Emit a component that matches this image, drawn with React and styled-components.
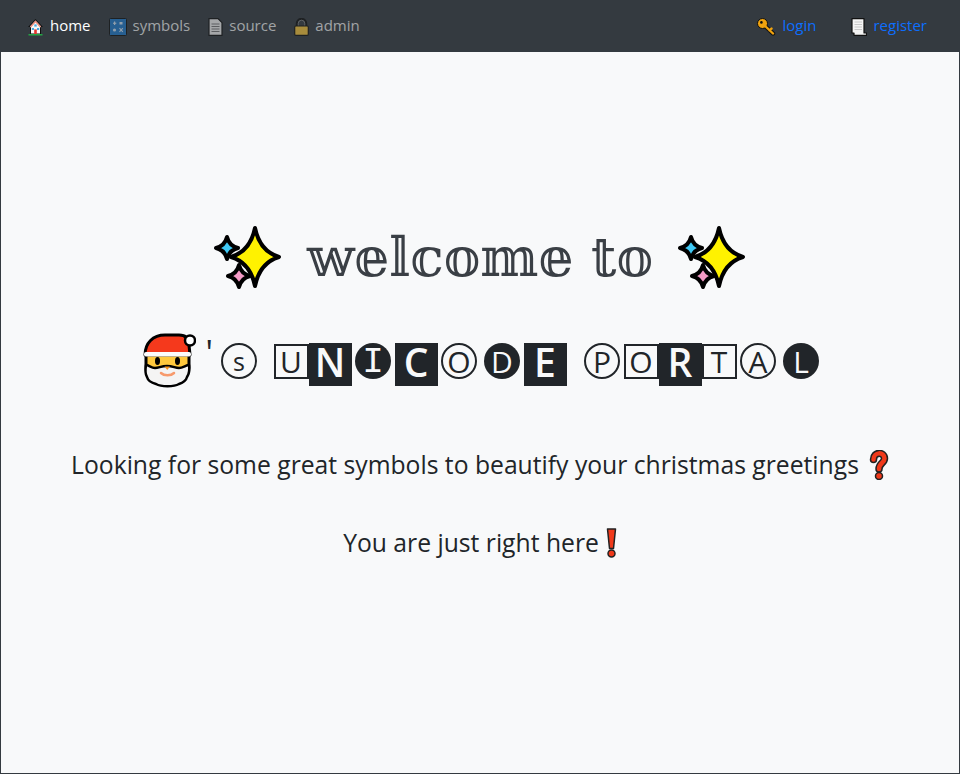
import React from 'react';
import styled, { createGlobalStyle } from 'styled-components';

const GlobalStyle = createGlobalStyle`
    html, body {
        margin: 0;
        padding: 0;
        height: 100%;
    }
    #root {
        height: 100%;
    }
    body {
        font-family: "Open Sans", "Noto Sans", sans-serif;
        color: #212529;
        background-color: #f8f9fa;
    }
`;

const Page = styled.div`
    box-sizing: border-box;
    height: 774px;
    display: flex;
    flex-direction: column;
    border: 1px solid #343a40;
    border-top: none;
`;

const NavBar = styled.nav`
    height: 52px;
    flex-shrink: 0;
    display: flex;
    align-items: center;
    justify-content: space-between;
    padding: 0 32px 0 26px;
    background-color: #343a40;
`;

const NavGroup = styled.div`
    display: flex;
    align-items: center;
    gap: ${(props) => props.$gap}px;
`;

const NavLink = styled.a`
    display: flex;
    align-items: center;
    gap: 6px;
    height: 20px;
    font-size: 15px;
    line-height: 16px;
    color: ${(props) => props.$color};
    text-decoration: none;

    svg {
        flex-shrink: 0;
        margin-top: 1px;
        opacity: ${(props) => props.$dim ? 0.6 : 1};
    }
`;

const NavLabel = styled.span`
    display: block;
    padding-bottom: 2px;
`;

const Main = styled.main`
    flex: 1;
    display: flex;
    flex-direction: column;
    align-items: center;
    padding-top: 169px;
`;

const Heading = styled.h1`
    margin: 0;
    display: flex;
    align-items: center;
    gap: 25px;
    height: 72px;
    font-family: "DejaVu Serif", serif;
    font-size: 55px;
    font-weight: 400;
    color: #3a3f45;
    white-space: nowrap;
`;

const Portal = styled.h2`
    margin: 40px 0 0;
    padding-left: 3px;
    display: flex;
    align-items: flex-start;
    height: 55px;
    font-weight: 400;
`;

const Santa = styled.svg`
    margin-right: 10px;
`;

const Apostrophe = styled.span`
    width: 12px;
    margin-top: 2px;
    font-size: 34px;
    line-height: 34px;
`;

const Word = styled.span`
    display: flex;
    align-items: flex-start;
    margin-left: ${(props) => props.$gap}px;
`;

const Letter = styled.span`
    box-sizing: border-box;
    flex-shrink: 0;
    display: flex;
    align-items: center;
    justify-content: center;
    margin-top: 10px;
    ${(props) => props.$kind === 'outline' && `
        width: 35px;
        height: 35px;
        margin-top: 11px;
        border: 2px solid #212529;
        font-size: 30px;
        font-weight: 400;
        color: #212529;
    `}
    ${(props) => props.$kind === 'solid' && `
        width: 43px;
        height: 43px;
        padding-bottom: 7px;
        background-color: #212529;
        font-size: 39px;
        font-weight: 600;
        color: #f8f9fa;
    `}
    ${(props) => props.$kind === 'ring' && `
        width: 36px;
        height: 36px;
        margin-left: 3.5px;
        margin-right: 3.5px;
        border: 2px solid #212529;
        border-radius: 50%;
        font-size: 30px;
        font-weight: 400;
        color: #212529;
    `}
    ${(props) => props.$kind === 'disc' && `
        width: 36px;
        height: 36px;
        margin-left: 3.5px;
        margin-right: 3.5px;
        background-color: #212529;
        border-radius: 50%;
        font-size: 30px;
        font-weight: 400;
        color: #f8f9fa;
    `}
    ${(props) => props.$slab && `
        padding-top: 3px;
        font-family: "Liberation Mono", monospace;
        font-size: 36px;
    `}
    ${(props) => props.$small && `
        font-size: 25px;
    `}
`;

const Lead = styled.p`
    margin: ${(props) => props.$top}px 0 0;
    display: flex;
    align-items: center;
    gap: ${(props) => props.$gap}px;
    font-size: 24.7px;
    line-height: 36px;
    white-space: nowrap;
`;

const HomeIcon = () => (
    <svg width="17" height="18" viewBox="0 0 17 18">
        <path d="M8.5 1 L16 9 H14 V16.500 H3 V9 H1 Z" fill="#111" />
        <path d="M8.500 2.600 L14 8.400 L13 9.500 V15.500 H4 V9.500 L3 8.400 Z" fill="#f7f7f7" />
        <path d="M8.500 2.600 L14 8.400 L13 9.400 L8.500 4.600 L4 9.400 L3 8.400 Z" fill="#ee8a78" />
        <rect x="7.300" y="6.400" width="2.400" height="2.200" fill="#49a8e0" />
        <rect x="4.800" y="10" width="2.200" height="2" fill="#49a8e0" />
        <rect x="10" y="10" width="2.200" height="2" fill="#49a8e0" />
        <rect x="7.200" y="11.400" width="2.600" height="4.600" fill="#e5352b" />
        <rect x="1.500" y="16" width="14" height="1.500" fill="#23a344" />
    </svg>
);

const SymbolsIcon = () => (
    <svg width="18" height="18" viewBox="0 0 18 18">
        <rect x="0.500" y="0.500" width="17" height="17" rx="1" fill="#1f78c8" stroke="#111" />
        <rect x="5" y="3.500" width="1.200" height="3.500" fill="#cfe3f5" />
        <rect x="4" y="4.700" width="3.300" height="1.100" fill="#cfe3f5" />
        <rect x="10.500" y="4" width="3" height="2.500" fill="#cfe3f5" />
        <circle cx="5.500" cy="12" r="1.600" fill="#cfe3f5" />
        <path d="M10.500 10.200 L13.800 13.800 M13.800 10.200 L10.500 13.800" stroke="#cfe3f5" strokeWidth="1.100" />
    </svg>
);

const PageIcon = () => (
    <svg width="15" height="18" viewBox="0 0 15 18">
        <path d="M1 0.700 H10 L14 4.700 V17.300 H1 Z" fill="#f0f0f0" stroke="#111" strokeWidth="1.200" />
        <path d="M3.500 6 H11.500 M3.500 8.500 H11.500 M3.500 11 H11.500 M3.500 13.500 H11.500" stroke="#777" strokeWidth="1" />
    </svg>
);

const LockIcon = () => (
    <svg width="15" height="18" viewBox="0 0 15 18">
        <path d="M3 9 V5.500 a4.500 4.500 0 0 1 9 0 V9" fill="none" stroke="#111" strokeWidth="2.400" />
        <path d="M4.200 8 V5.500 a3.300 3.300 0 0 1 6.600 0 V8" fill="none" stroke="#bbb" strokeWidth="0.600" />
        <rect x="0.700" y="8" width="13.600" height="9.300" rx="1" fill="#f5c33b" stroke="#111" strokeWidth="1.200" />
    </svg>
);

const KeyIcon = () => (
    <svg width="20" height="18" viewBox="0 0 20 18">
        <path d="M6 6 L16 15.500" stroke="#111" strokeWidth="4.400" strokeLinecap="round" />
        <circle cx="5.500" cy="5.500" r="5" fill="#f0a30f" stroke="#111" strokeWidth="1" />
        <path d="M6 6 L16 15.500 M12.500 12.200 L14.500 10.600" stroke="#f0a30f" strokeWidth="2.400" strokeLinecap="round" />
        <circle cx="4.400" cy="4.400" r="1.300" fill="#111" />
    </svg>
);

const ReceiptIcon = () => (
    <svg width="16" height="18" viewBox="0 0 16 18">
        <path d="M1 0.700 H13 V15 H15.500 V17.300 H3 V15 H1 Z" fill="#f4f4f4" stroke="#111" strokeWidth="1.200" strokeLinejoin="round" />
        <path d="M3.500 4 H11 M3.500 6.500 H11 M3.500 9 H11 M3.500 11.500 H11" stroke="#c8c8c8" strokeWidth="1" />
    </svg>
);

const star = (cx, cy, rx, ry, k) => {
    const x = rx * k;
    const y = ry * k;
    return `M${cx} ${cy - ry} Q${cx + x} ${cy - y} ${cx + rx} ${cy} Q${cx + x} ${cy + y} ${cx} ${cy + ry} Q${cx - x} ${cy + y} ${cx - rx} ${cy} Q${cx - x} ${cy - y} ${cx} ${cy - ry} Z`;
};

const Sparkles = () => (
    <svg width="68" height="64" viewBox="0 0 68 64">
        <path d={star(13, 23, 11, 11, 0.2)} fill="#3fc8f4" stroke="#000" strokeWidth="4" strokeLinejoin="round" />
        <path d={star(25, 51, 11, 11, 0.2)} fill="#f49ac6" stroke="#000" strokeWidth="4" strokeLinejoin="round" />
        <path d={star(41, 32, 24, 29, 0.2)} fill="#fff200" stroke="#000" strokeWidth="4" strokeLinejoin="round" />
    </svg>
);

const SantaIcon = () => (
    <Santa width="55" height="55" viewBox="0 0 55 55">
        <path d="M4 22 C4 10 12 2 24 2 H38 C44 2 48 5 48 12 L49 22 Z" fill="#f5391c" stroke="#000" strokeWidth="3" strokeLinejoin="round" />
        <circle cx="49" cy="7.500" r="5" fill="#fff" stroke="#000" strokeWidth="2.500" />
        <path d="M5 22 H48 V34 C48 42 44 50 26 50 C8 50 5 42 5 34 Z" fill="#ffc83d" stroke="#000" strokeWidth="3" />
        <path d="M5 32 C8 32 10 35 14 35 C18 35 20 33 26 33 C32 33 34 35 38 35 C42 35 45 32 48 32 C49 38 48 41 46 44 C45 48 41 50 38 51 C33 54 20 54 15 51 C11 50 7 48 6 44 C4 41 4 38 5 32 Z" fill="#f4f4f4" stroke="#000" strokeWidth="2.500" strokeLinejoin="round" />
        <rect x="3" y="19" width="47" height="4.500" rx="2" fill="#fbfbfb" />
        <ellipse cx="16.500" cy="28" rx="2.500" ry="4" fill="#000" />
        <ellipse cx="36.500" cy="28" rx="2.500" ry="4" fill="#000" />
        <path d="M23.500 33.500 H29 L26.200 37 Z" fill="#f7941e" />
        <path d="M20 40 C23 43 30 43 33 40" fill="none" stroke="#f79a6c" strokeWidth="2.500" strokeLinecap="round" />
    </Santa>
);

const QuestionIcon = () => (
    <svg width="20" height="30" viewBox="0 0 20 30">
        <path d="M4.500 9.500 C4.500 1.500 15.500 1.500 15.500 8.500 C15.500 13 10 13 10 19" fill="none" stroke="#222" strokeWidth="7.500" strokeLinecap="round" />
        <path d="M4.500 9.500 C4.500 1.500 15.500 1.500 15.500 8.500 C15.500 13 10 13 10 19" fill="none" stroke="#f0391a" strokeWidth="4.500" strokeLinecap="round" />
        <circle cx="10" cy="26" r="3.500" fill="#f0391a" stroke="#222" strokeWidth="1.500" />
    </svg>
);

const ExclamationIcon = () => (
    <svg width="11" height="30" viewBox="0 0 11 30">
        <path d="M1.500 1 H9.500 L7.500 20.500 H3.500 Z" fill="#f0391a" stroke="#222" strokeWidth="1.500" strokeLinejoin="round" />
        <circle cx="5.500" cy="25.500" r="3.500" fill="#f0391a" stroke="#222" strokeWidth="1.500" />
    </svg>
);

const unicode = [
    ['U', 'outline'], ['N', 'solid'], ['I', 'disc', true], ['C', 'solid'], ['O', 'ring'], ['D', 'disc'], ['E', 'solid'],
];

const portal = [
    ['P', 'ring'], ['O', 'outline'], ['R', 'solid'], ['T', 'outline'], ['A', 'ring'], ['L', 'disc'],
];

const renderLetters = (letters) => letters.map(([char, kind, slab], i) => (
    <Letter key={i} $kind={kind} $slab={slab}>{char}</Letter>
));

export default function App() {
    return (
        <Page>
            <GlobalStyle />
            <NavBar>
                <NavGroup $gap={18}>
                    <NavLink $color="#ffffff"><HomeIcon /><NavLabel>home</NavLabel></NavLink>
                    <NavLink $color="rgba(255,255,255,0.55)" $dim><SymbolsIcon /><NavLabel>symbols</NavLabel></NavLink>
                    <NavLink $color="rgba(255,255,255,0.55)" $dim><PageIcon /><NavLabel>source</NavLabel></NavLink>
                    <NavLink $color="rgba(255,255,255,0.55)" $dim><LockIcon /><NavLabel>admin</NavLabel></NavLink>
                </NavGroup>
                <NavGroup $gap={35}>
                    <NavLink $color="#0d6efd"><KeyIcon /><NavLabel>login</NavLabel></NavLink>
                    <NavLink $color="#0d6efd"><ReceiptIcon /><NavLabel>register</NavLabel></NavLink>
                </NavGroup>
            </NavBar>
            <Main>
                <Heading>
                    <Sparkles />
                    <span>𝕨𝕖𝕝𝕔𝕠𝕞𝕖 𝕥𝕠</span>
                    <Sparkles />
                </Heading>
                <Portal>
                    <SantaIcon />
                    <Apostrophe>'</Apostrophe>
                    <Letter $kind="ring" $small>s</Letter>
                    <Word $gap={13}>{renderLetters(unicode)}</Word>
                    <Word $gap={14}>{renderLetters(portal)}</Word>
                </Portal>
                <Lead $top={59} $gap={10}>
                    Looking for some great symbols to beautify your christmas greetings
                    <QuestionIcon />
                </Lead>
                <Lead $top={42} $gap={7}>
                    You are just right here
                    <ExclamationIcon />
                </Lead>
            </Main>
        </Page>
    );
}
